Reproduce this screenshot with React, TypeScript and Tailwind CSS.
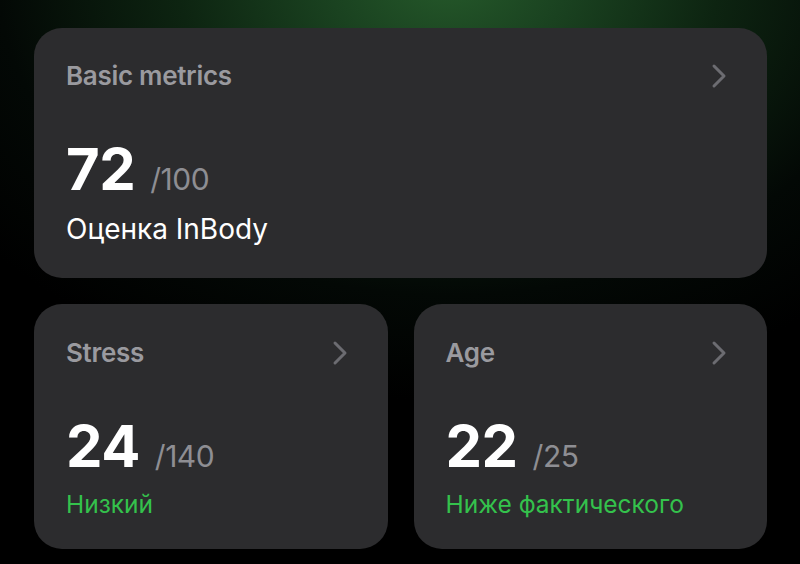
type Metric = {
  title: string;
  value: string;
  max: string;
  note: string;
  noteColor: string;
};

const summary: Metric = {
  title: "Basic metrics",
  value: "72",
  max: "/100",
  note: "Оценка InBody",
  noteColor: "text-white",
};

const details: Metric[] = [
  {
    title: "Stress",
    value: "24",
    max: "/140",
    note: "Низкий",
    noteColor: "text-[#34c24c]",
  },
  {
    title: "Age",
    value: "22",
    max: "/25",
    note: "Ниже фактического",
    noteColor: "text-[#34c24c]",
  },
];

function Chevron() {
  return (
    <svg width="16" height="26" viewBox="0 0 16 26" fill="none" className="text-[#6c6c71]">
      <polyline
        points="3,3 13,13 3,23"
        stroke="currentColor"
        strokeWidth="3"
        strokeLinecap="round"
        strokeLinejoin="round"
      />
    </svg>
  );
}

function MetricCard({ item, large }: { item: Metric; large?: boolean }) {
  return (
    <div
      className={`bg-[#2c2c2e] rounded-[28px] pl-8 pr-10 ${
        large ? "pt-8 pb-[33px]" : "pt-[33px] pb-[31px]"
      }`}
    >
      <div className="flex items-center justify-between h-8">
        <h2 className="text-[26px] leading-8 font-semibold tracking-[-0.3px] text-[#9a9a9f]">
          {item.title}
        </h2>
        <Chevron />
      </div>

      <div className="flex items-baseline mt-12">
        <span className="text-[58px] leading-[58px] font-bold text-white tracking-[-0.5px]">
          {item.value}
        </span>
        <span className="ml-[15px] text-[30px] leading-none text-[#8e8e93] tracking-[-0.5px]">
          {item.max}
        </span>
      </div>

      <p
        className={`mt-[15px] ${
          large ? "text-[28px] leading-8" : "text-[24.5px] leading-7"
        } ${item.noteColor}`}
      >
        {item.note}
      </p>
    </div>
  );
}

export default function App() {
  return (
    <div
      className="min-h-screen w-[800px] h-[564px] overflow-hidden bg-black bg-[radial-gradient(ellipse_75%_75%_at_56%_-4%,#25592a_0%,#1a4220_20%,#0d2411_45%,#030805_75%,#000_100%)] pl-[34px] pr-[33px] pt-[28px]"
      style={{ fontFamily: "Inter, 'Noto Sans', sans-serif" }}
    >
      <MetricCard item={summary} large />

      <div className="grid grid-cols-2 gap-[26px] mt-[26px]">
        {details.map((item) => (
          <MetricCard key={item.title} item={item} />
        ))}
      </div>
    </div>
  );
}
